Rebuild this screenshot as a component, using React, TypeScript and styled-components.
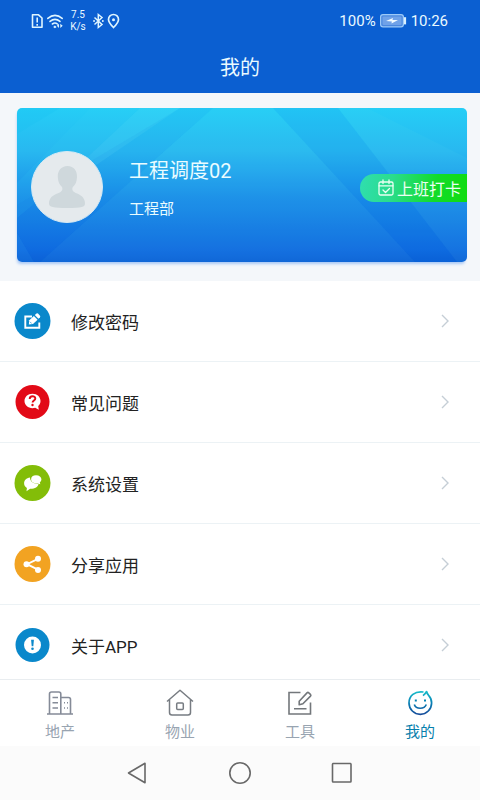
import React from "react";
import styled, { createGlobalStyle } from "styled-components";

const GlobalStyle = createGlobalStyle`
  * { box-sizing: border-box; }
  body {
    margin: 0;
    font-family: Roboto, "Noto Sans CJK SC", sans-serif;
    background: #fff;
    color: #222;
  }
  button { font: inherit; border: 0; padding: 0; background: none; cursor: pointer; }
  a { color: inherit; text-decoration: none; }
  svg { display: block; flex: none; }
`;

const Page = styled.div`
  height: 100vh;
  display: flex;
  flex-direction: column;
`;

const Header = styled.header`
  flex: none;
  background: #0b5fd1;
  color: #eafaff;
`;

const StatusBar = styled.div`
  display: flex;
  justify-content: space-between;
  align-items: center;
  height: 41px;
  padding: 0 32px 0 30px;
  font-size: 15px;
`;

const StatusGroup = styled.div<{ $gap: number }>`
  display: flex;
  align-items: center;
  gap: ${({ $gap }) => $gap}px;
`;

const Speed = styled.div`
  width: 24px;
  text-align: center;
  font-size: 10px;
  line-height: 12px;
`;

const Title = styled.h1`
  margin: 0;
  height: 52px;
  font-size: 20px;
  line-height: 54px;
  font-weight: 400;
  text-align: center;
`;

const Profile = styled.section`
  flex: none;
  padding: 15px 13px 19px 17px;
  background: #f4f7fa;
`;

const Card = styled.div`
  position: relative;
  display: flex;
  align-items: center;
  height: 154px;
  padding-left: 14px;
  border-radius: 5px;
  color: #eafcff;
  background: linear-gradient(#25cef6 0%, #28b8f0 28%, #1a8ee8 58%, #106be0 92%, #0b60d6 100%);
  box-shadow: -1px 3px 3px -1px #a9c9f5;
`;

const Facets = styled.svg`
  position: absolute;
  inset: 0;
  width: 100%;
  height: 100%;
  border-radius: 5px;
`;

const Avatar = styled.div`
  position: relative;
  flex: none;
  width: 72px;
  height: 72px;
  margin-top: 4px;
  border: 1px solid #d7eaf4;
  border-radius: 50%;
  background: #e5eaed;
  display: grid;
  place-items: center;
`;

const Person = styled.div`
  position: relative;
  flex: 1;
  margin-left: 26px;
  padding-top: 8px;
`;

const Name = styled.div`
  font-size: 20px;
  line-height: 28px;
`;

const Department = styled.div`
  margin-top: 12px;
  font-size: 15px;
  line-height: 24px;
`;

const ClockIn = styled.button`
  position: relative;
  display: flex;
  align-items: center;
  gap: 3px;
  height: 28px;
  margin-top: 5px;
  && { padding: 0 6px 0 18px; font-size: 16px; }
  color: #eafff2;
  border-radius: 14px 0 0 14px;
  background: linear-gradient(100deg, #30deb0 0%, #2adc8c 30%, #12dc28 70%, #10dc10 100%);
`;

const Menu = styled.nav`
  flex: 1 1 0;
  min-height: 0;
  overflow: hidden;
`;

const MenuRow = styled.a`
  display: flex;
  align-items: center;
  height: 81px;
  padding: 0 29px 0 14px;
  border-bottom: 1px solid #ecf2f5;
  font-size: 17px;
`;

const MenuLabel = styled.span`
  flex: 1;
  margin-left: 20px;
`;

const TabBar = styled.nav`
  flex: none;
  display: grid;
  grid-template-columns: repeat(4, 1fr);
  height: 67px;
  border-top: 1px solid #e9edf0;
`;

const Tab = styled.button<{ $active?: boolean }>`
  display: flex;
  flex-direction: column;
  align-items: center;
  && { padding-top: 9px; font-size: 15px; }
  gap: 4px;
  line-height: 22px;
  color: ${({ $active }) => ($active ? "#087fad" : "#98a4b1")};
`;

const SystemBar = styled.nav`
  flex: none;
  display: flex;
  justify-content: center;
  align-items: center;
  gap: 78px;
  height: 54px;
  background: #fbfbfb;
`;

const StatusIcons = () => (
  <svg width="34" height="20" viewBox="0 0 34 20" fill="none" stroke="#dff5ff" strokeWidth="1.6">
    <path d="M2.5 3.8h6L12 7v9.2H2.5z" strokeLinejoin="round" />
    <path d="M7.2 6.5v5m0 1.5v1.8" />
    <g strokeLinecap="round">
      <path d="M17.8 7.4q7.2-6 14.4 0M20 10.4q5-4 10 0M22.4 13q2.6-2 5 0" />
    </g>
    <path d="M23.2 16l1.7-1.5 1.7 1.5-1.7 1.3z" fill="#dff5ff" stroke="none" />
    <path d="M29 12.7l-2.2 2.1 2.2 2.1zM30.3 12.7l2.4 2.1-2.4 2.1z" fill="#dff5ff" stroke="none" />
  </svg>
);

const BluetoothPin = () => (
  <svg width="28" height="20" viewBox="0 0 28 20" fill="none" stroke="#dff5ff" strokeWidth="1.5">
    <path d="M2.500 6.500l7.500 7-3.700 3V3.500l3.700 3-7.500 7" />
    <path d="M2 10h.1M10.800 10h.1" strokeWidth="1.8" strokeLinecap="round" />
    <path d="M21.500 16.500c-3-3-5-5.200-5-8a5 5 0 0 1 10 0c0 2.800-2 5-5 8z" strokeWidth="1.7" />
    <circle cx="21.500" cy="8.800" r="1.500" fill="#dff5ff" stroke="none" />
  </svg>
);

const Battery = () => (
  <svg width="27" height="14" viewBox="0 0 27 14">
    <rect x=".6" y=".6" width="22.8" height="12.2" rx="2.4" fill="#4b88df" stroke="#9dcaf8" strokeWidth="1.2" />
    <rect x="2.5" y="2.5" width="19" height="8.5" rx="1" fill="#70a2e8" />
    <path d="M6 7l7-3-.5 2H18l-6.5 3.5.3-2z" fill="#f2fbff" />
    <path d="M25 3.2v7.2" stroke="#d9f0ff" strokeWidth="2.2" />
  </svg>
);

const CardFacets = () => (
  <Facets viewBox="0 0 450 154" preserveAspectRatio="none" aria-hidden="true">
    <path d="M0 0H43L0 26z" fill="#18bff0" opacity=".22" />
    <path d="M73 0H123L46 72 0 110V75z" fill="#36d8f5" opacity=".1" />
    <path d="M123 0H163L69 64 31 86z" fill="#70eafa" opacity=".14" />
    <path d="M163 0H196L23 154H17L0 125V97z" fill="#0876df" opacity=".07" />
    <path d="M0 125L17 154H0z" fill="#37a7f0" opacity=".13" />
    <path d="M196 0H256L398 154H23z" fill="#65e4f2" opacity=".06" />
    <path d="M256 0H321L440 154H398z" fill="#0068e0" opacity=".1" />
    <path d="M321 0H350L450 50V154H440z" fill="#65e4f5" opacity=".07" />
  </Facets>
);

const AvatarGlyph = () => (
  <svg width="70" height="70" viewBox="0 0 70 70" fill="#cfd8dc" aria-hidden="true">
    <path d="M35.500 14C29 14 25.500 19 25.800 25c.2 5 2 8 4.200 10 1.200 3-.5 5-4 6.200C20.500 43.200 17 46 17 51.500 17 55 21 56 35.500 56S53 55 53 51.500C53 46 49.500 43.200 44.500 41.200c-3.500-1.300-5-3.200-3.700-6.200 2.400-2 4-5 4.200-10 .3-6-3-11-9.500-11z" />
  </svg>
);

const CalendarCheck = () => (
  <svg width="16" height="17" viewBox="0 0 16 17" fill="none" stroke="#eafff2" strokeWidth="1.3" strokeLinecap="round" strokeLinejoin="round">
    <rect x="1" y="3" width="14" height="13" rx="1.5" />
    <path d="M1 6.800h14M5 1v3.500M11 1v3.500M5 11l2.500 2.500 4-4" />
  </svg>
);

const Chevron = () => (
  <svg width="12" height="16" viewBox="0 0 12 16" fill="none" stroke="#c5ced6" strokeWidth="1.4" aria-hidden="true">
    <path d="M3 2l6 6-6 6" />
  </svg>
);

const glyphs = {
  edit: (
    <>
      <path d="M17.500 13.500H10.800v11.300h14V19.500" fill="none" stroke="#fff" strokeWidth="1.900" />
      <path d="M14.300 21.600l.5-4.400 4.600-4.300 3.700 3.900-4.600 4.300z" fill="#fff" />
      <path d="M20.300 12.100l1.700-1.600q.8-.6 1.500.1l2 2.100q.6.800 0 1.500L23.900 15.800z" fill="#fff" />
      <path d="M15.500 18.800l1.700 1.700" stroke="#0a88cb" strokeWidth=".7" />
    </>
  ),
  question: (
    <>
      <path d="M18 9.800c4.700 0 8 3.200 8 7.300 0 2.100-.8 3.700-2.300 5l.6 3.600-3.600-1.900c-5.700 1.400-10.700-1.700-10.700-6.700 0-4.100 3.300-7.300 8-7.300z" fill="#fff" />
      <path d="M15.200 15c0-3.700 5.600-3.500 5.600-.4 0 2-2.700 2-2.700 4" fill="none" stroke="#e20a17" strokeWidth="1.900" />
      <circle cx="18" cy="21" r="1.200" fill="#e20a17" />
    </>
  ),
  chat: (
    <>
      <path d="M15.500 12.500c-3.700.6-5.900 2.900-5.900 5.700 0 2.200 1 3.600 2.800 4.700l-.4 3.400 3.600-2.500c5 .1 7.900-2 8.400-4.900-4.500 0-8.500-2-8.500-6.400z" fill="#fff" />
      <path d="M21.500 10.200c3.300 0 5.400 1.700 5.400 4.100 0 1.400-.6 2.500-1.600 3.200l.5 1.800-2.800-.8c-4 .1-6.400-1.600-6.400-4.200s2-4.100 4.900-4.100z" fill="#fff" />
    </>
  ),
  share: (
    <>
      <path d="M23.500 12.800L12.500 18.200l11 5.500" fill="none" stroke="#fff" strokeWidth="1.900" />
      <circle cx="23.500" cy="12.800" r="3" fill="#fff" />
      <circle cx="12" cy="18.200" r="3" fill="#fff" />
      <circle cx="23.500" cy="24" r="3" fill="#fff" />
    </>
  ),
  about: (
    <>
      <circle cx="18" cy="18" r="8.500" fill="#fff" />
      <path d="M16.600 12.800h2.800l-.6 6.500h-1.600z" fill="#0a88cb" />
      <circle cx="18" cy="21.800" r="1.300" fill="#0a88cb" />
    </>
  ),
};

const menuItems: { label: string; glyph: keyof typeof glyphs; color: string; radius: number }[] = [
  { label: "修改密码", glyph: "edit", color: "#0a88cb", radius: 18 },
  { label: "常见问题", glyph: "question", color: "#e20a17", radius: 17 },
  { label: "系统设置", glyph: "chat", color: "#83bd08", radius: 18 },
  { label: "分享应用", glyph: "share", color: "#f2a322", radius: 18 },
  { label: "关于APP", glyph: "about", color: "#0a88cb", radius: 17 },
];

const Buildings = () => (
  <svg width="28" height="28" viewBox="0 0 28 28" fill="none" stroke="#858b98" strokeWidth="1.6">
    <path d="M1 25h26M3.500 25V5q0-2 2-2h7.300q2 0 2 2v20M14.800 8.500h7.700q2 0 2 2V25" />
    <path d="M6.500 8.500h5.500M6.500 13.700h5.500M6.500 19h5.500M18 13.700h1m2 0h1M18 19h1m2 0h1" />
  </svg>
);

const House = () => (
  <svg width="28" height="28" viewBox="0 0 28 28" fill="none" stroke="#777c82" strokeWidth="1.5" strokeLinejoin="round">
    <path d="M1 12.500L14 1.200 27 12.500M3.500 10.500v13q0 2.500 2.500 2.500h16q2.500 0 2.500-2.500v-13" />
    <rect x="10.700" y="14" width="6.600" height="6.500" rx="1" />
  </svg>
);

const Compose = () => (
  <svg width="28" height="28" viewBox="0 0 28 28" fill="none" stroke="#73777b" strokeWidth="1.6">
    <path d="M14.500 3.500H3V25h21.500V13.500M8 19.800h12.500" />
    <path d="M13.200 12.200l7.800-8.300q.9-.9 1.800-.1l1.600 1.500q.9.900.1 1.800l-7.600 7.700-3.700.9z" strokeLinejoin="round" />
  </svg>
);

const Smile = () => (
  <svg width="28" height="28" viewBox="0 0 28 28" fill="none" stroke="url(#smile)" strokeWidth="1.700">
    <defs>
      <linearGradient id="smile" x1="0" y1="2" x2="0" y2="26" gradientUnits="userSpaceOnUse">
        <stop stopColor="#18bfcb" />
        <stop offset=".5" stopColor="#087fb4" />
        <stop offset="1" stopColor="#184a99" />
      </linearGradient>
    </defs>
    <path d="M17.500 3C8.500 1.800 3 7 3 14a11.300 11.300 0 0 0 22.600 0c0-3-1-5.500-2.800-7.400-1.100-1.200-1.900-2.500-2.200-4.100-1 1.900-2 3-3.600 4.100" strokeLinejoin="round" />
    <path d="M8.300 15.500c1.800 5 10 5 12 0" />
    <path d="M8.800 10.500h2v2h-2zM18 10.500h2v2h-2z" fill="#0781b1" stroke="none" />
  </svg>
);

const tabs = [
  { label: "地产", icon: <Buildings /> },
  { label: "物业", icon: <House /> },
  { label: "工具", icon: <Compose /> },
  { label: "我的", icon: <Smile />, active: true },
];

const systemKeys = [
  { label: "返回", shape: <path d="M2.500 12L19 2.300v19.400z" /> },
  { label: "主页", shape: <circle cx="12" cy="12" r="10.200" /> },
  { label: "最近任务", shape: <rect x="2.500" y="2.500" width="18.500" height="18.500" rx=".7" /> },
];

export default function App() {
  return (
    <Page>
      <GlobalStyle />
      <Header>
        <StatusBar>
          <StatusGroup $gap={2}>
            <StatusIcons />
            <Speed>7.5<br />K/s</Speed>
            <BluetoothPin />
          </StatusGroup>
          <StatusGroup $gap={4}>
            <span>100%</span>
            <Battery />
            <span>10:26</span>
          </StatusGroup>
        </StatusBar>
        <Title>我的</Title>
      </Header>
      <Profile>
        <Card>
          <CardFacets />
          <Avatar><AvatarGlyph /></Avatar>
          <Person>
            <Name>工程调度02</Name>
            <Department>工程部</Department>
          </Person>
          <ClockIn type="button"><CalendarCheck />上班打卡</ClockIn>
        </Card>
      </Profile>
      <Menu>
        {menuItems.map(({ label, glyph, color, radius }) => (
          <MenuRow href="#" key={label}>
            <svg width="37" height="36" viewBox="0 0 36 36" aria-hidden="true">
              <circle cx="18" cy="18" r={radius} fill={color} />
              {glyphs[glyph]}
            </svg>
            <MenuLabel>{label}</MenuLabel>
            <Chevron />
          </MenuRow>
        ))}
      </Menu>
      <TabBar>
        {tabs.map(({ label, icon, active }) => (
          <Tab type="button" key={label} $active={active}>{icon}{label}</Tab>
        ))}
      </TabBar>
      <SystemBar>
        {systemKeys.map(({ label, shape }) => (
          <button type="button" key={label} aria-label={label}>
            <svg width="24" height="24" viewBox="0 0 24 24" fill="none" stroke="#686868" strokeWidth="1.600" strokeLinejoin="round">{shape}</svg>
          </button>
        ))}
      </SystemBar>
    </Page>
  );
}
